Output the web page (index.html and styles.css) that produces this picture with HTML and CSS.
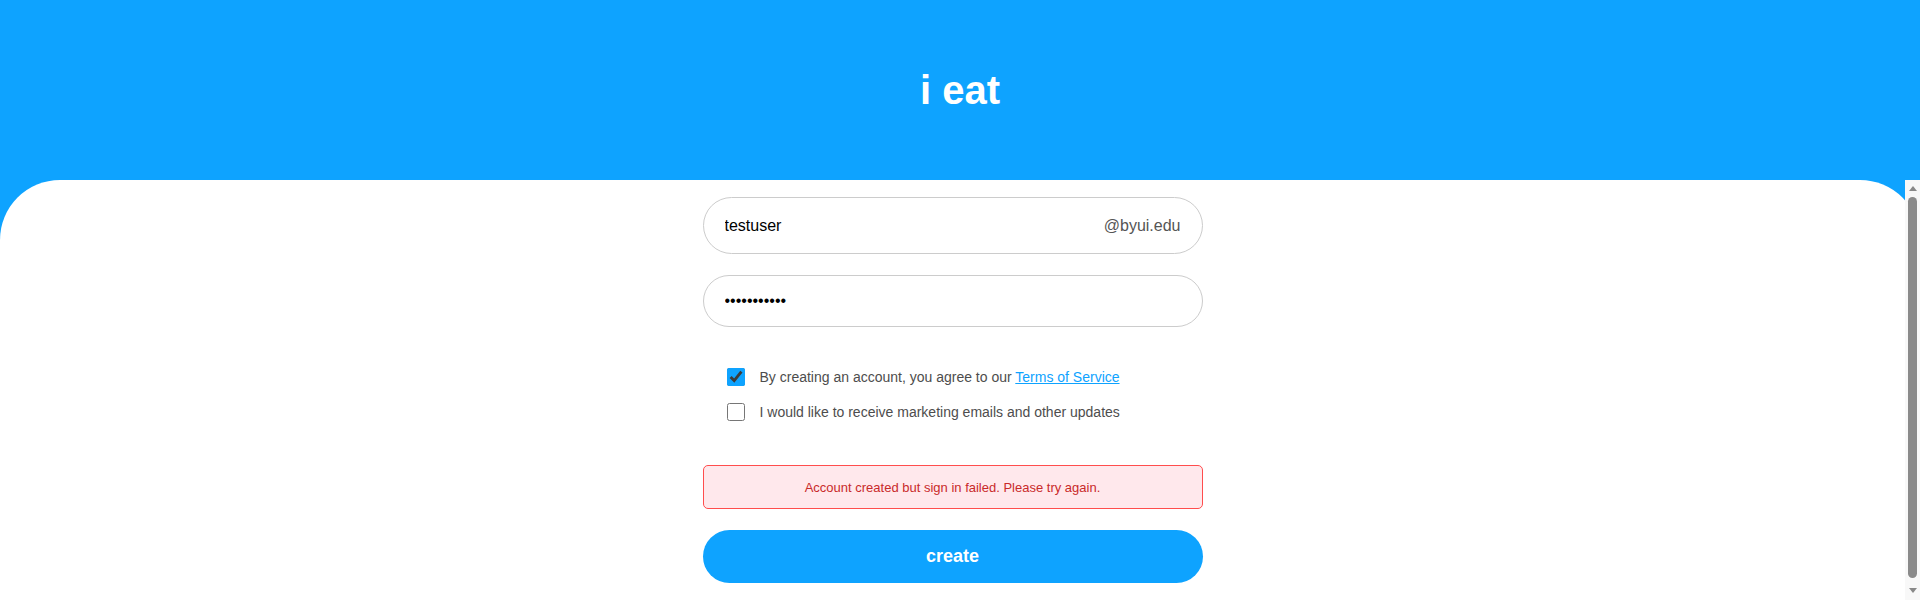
FILE: index.html
```html
<!DOCTYPE html>
<html lang="en">
<head>
<meta charset="utf-8">
<title>i eat</title>
<link rel="stylesheet" href="styles.css">
</head>
<body>
<header class="hero">
  <h1 class="brand">i eat</h1>
</header>
<main class="panel">
  <div class="scroll-area">
    <form class="signup" onsubmit="return false">
      <div class="field field-email">
        <input class="field-input" type="text" value="testuser" aria-label="Username">
        <span class="suffix">@byui.edu</span>
      </div>
      <div class="field field-password">
        <input class="field-input" type="password" value="password123" aria-label="Password">
      </div>
      <div class="checks">
        <label class="check-row">
          <input type="checkbox" class="check" checked>
          <span>By creating an account, you agree to our <a href="#" class="link">Terms of Service</a></span>
        </label>
        <label class="check-row">
          <input type="checkbox" class="check">
          <span>I would like to receive marketing emails and other updates</span>
        </label>
      </div>
      <div class="error">Account created but sign in failed. Please try again.</div>
      <button class="create" type="submit">create</button>
    </form>
  </div>
  <div class="scrollbar" aria-hidden="true">
    <div class="sb-btn sb-up">
      <svg width="8" height="5" viewBox="0 0 8 5"><polygon points="4,0 8,5 0,5" fill="#888"/></svg>
    </div>
    <div class="sb-track">
      <div class="sb-thumb"></div>
    </div>
    <div class="sb-btn sb-down">
      <svg width="8" height="5" viewBox="0 0 8 5"><polygon points="0,0 8,0 4,5" fill="#888"/></svg>
    </div>
  </div>
</main>
</body>
</html>
```
FILE: styles.css
```css
html, body {
  margin: 0;
  padding: 0;
  height: 100%;
}
body {
  background: #0ea3ff;
  font-family: "Liberation Sans", Arial, sans-serif;
  display: flex;
  flex-direction: column;
  overflow: hidden;
}
.hero {
  height: 180px;
  flex: 0 0 180px;
  display: flex;
  align-items: center;
  justify-content: center;
}
.brand {
  margin: 0;
  color: #fff;
  font-size: 40px;
  font-weight: 700;
}
.panel {
  flex: 1 1 auto;
  min-height: 0;
  background: #fff;
  border-radius: 60px 60px 0 0;
  display: flex;
}
.scroll-area {
  flex: 1 1 auto;
  min-width: 0;
  overflow: hidden;
}
.scrollbar {
  flex: 0 0 15px;
  width: 15px;
  background: #f8f8f8;
  display: flex;
  flex-direction: column;
}
.sb-btn {
  height: 16px;
  flex: 0 0 16px;
  display: flex;
  justify-content: center;
}
.sb-btn svg {
  display: block;
}
.sb-up {
  padding-top: 6px;
  box-sizing: border-box;
}
.sb-down {
  padding-top: 4px;
  box-sizing: border-box;
}
.sb-track {
  flex: 1 1 auto;
  padding: 1px 3px 0;
}
.sb-thumb {
  height: 381px;
  background: #8a8a8a;
  border-radius: 5px;
}
.signup {
  width: 500px;
  margin: 0 auto;
  padding: 17px 0 25px;
  display: flex;
  flex-direction: column;
}
.field {
  box-sizing: border-box;
  border: 1px solid #cccccc;
  border-radius: 30px;
  display: flex;
  align-items: center;
  padding: 0 21px 0 21px;
  background: #fff;
}
.field-email {
  height: 57px;
}
.field-password {
  height: 52px;
  margin-top: 21px;
}
.field-input {
  flex: 1;
  border: none;
  outline: none;
  background: transparent;
  font-family: "Liberation Sans", Arial, sans-serif;
  font-size: 16px;
  color: #000;
  padding: 0;
}
.suffix {
  font-size: 16px;
  color: #555;
}
.checks {
  margin-top: 38px;
  padding-left: 24px;
  display: flex;
  flex-direction: column;
  gap: 11px;
}
.check-row {
  display: flex;
  align-items: center;
  height: 24px;
  gap: 15px;
  font-size: 14px;
  color: #4d4d4d;
}
.check {
  width: 18px;
  height: 18px;
  margin: 0;
  accent-color: #0ea3ff;
}
.link {
  color: #0ea3ff;
  text-decoration: underline;
}
.error {
  margin-top: 41px;
  height: 44px;
  box-sizing: border-box;
  border: 1px solid #ff4d4d;
  border-radius: 5px;
  background: #ffe8ec;
  color: #c92a2a;
  font-size: 13px;
  display: flex;
  align-items: center;
  justify-content: center;
}
.create {
  margin-top: 21px;
  height: 53px;
  border: none;
  border-radius: 27px;
  background: #0ea3ff;
  color: #fff;
  font-family: "Liberation Sans", Arial, sans-serif;
  font-size: 18px;
  font-weight: 700;
  cursor: pointer;
}
```
